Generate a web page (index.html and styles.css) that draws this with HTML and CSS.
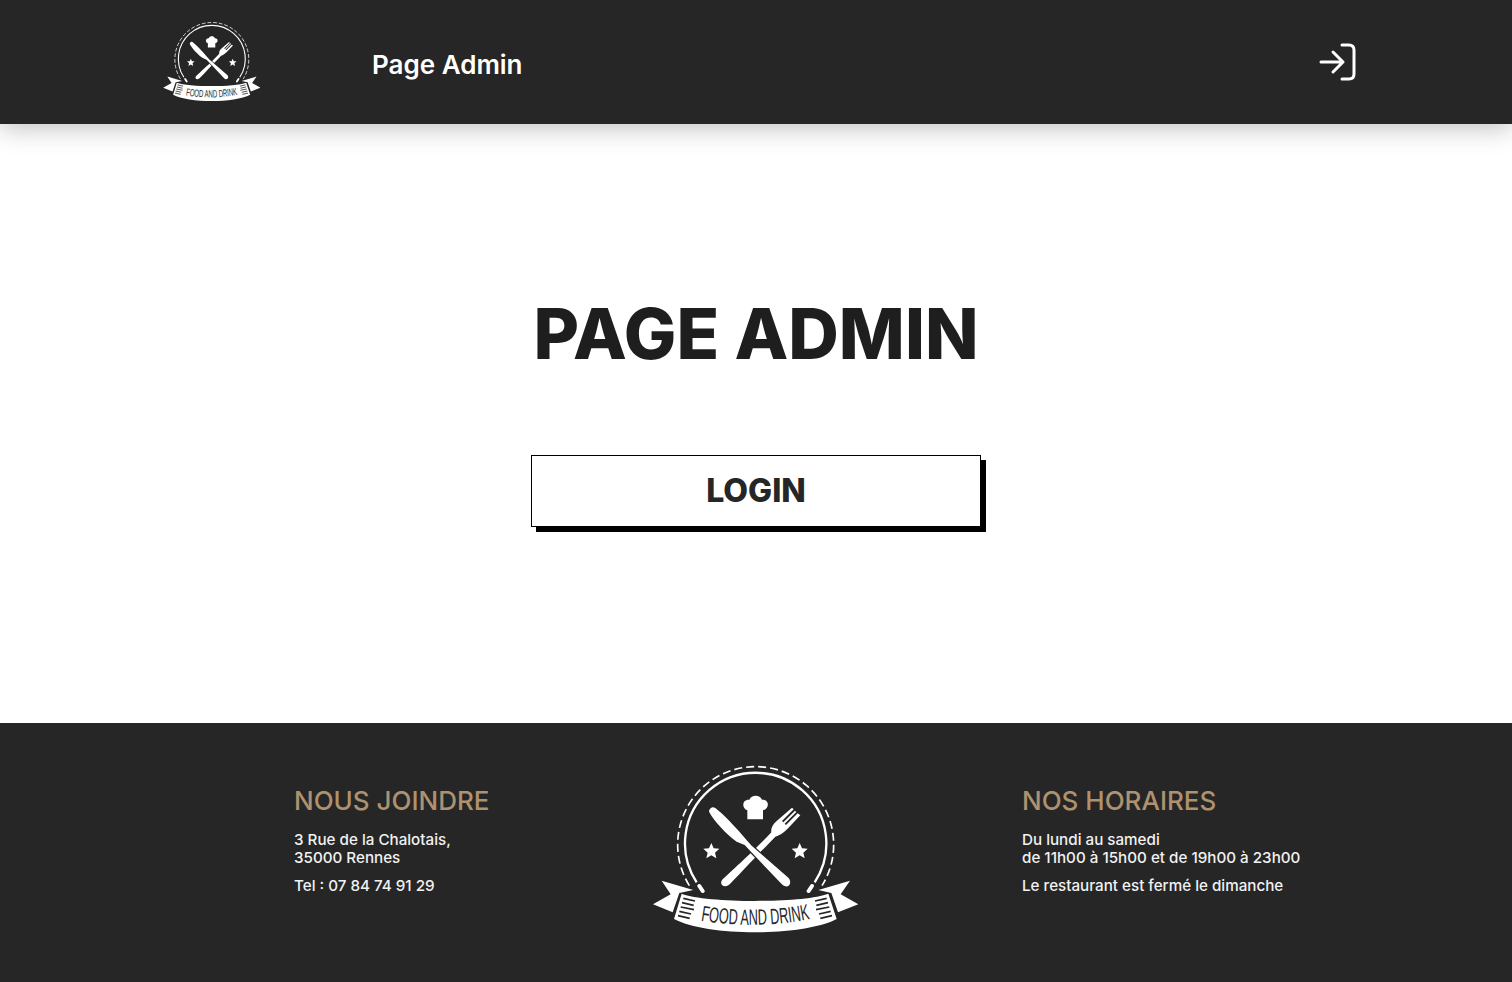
FILE: index.html
```html
<!DOCTYPE html>
<html lang="fr">
<head>
<meta charset="UTF-8">
<title>Page Admin</title>
<link rel="stylesheet" href="styles.css">
</head>
<body>
	<svg class="sprites" width="0" height="0">
		<defs>
			<path id="ribbon-line" d="M182 497 Q345 524 512 492"/>
		</defs>
		<symbol id="logo" viewBox="0 0 690 570">
			<!-- rings -->
			<path d="M148 392 A234 234 0 1 1 546 392" fill="none" stroke="#fff" stroke-width="5" stroke-dasharray="24 12"/>
			<path d="M170 382 A212 212 0 1 1 524 382" fill="none" stroke="#fff" stroke-width="7"/>
			<path d="M178 393 L188 408 M516 393 L506 408" stroke="#fff" stroke-width="12" stroke-linecap="round"/>
			<!-- chef hat -->
			<path d="M322 193 V166 C304 160 306 132 328 134 C334 118 360 118 366 134 C388 132 390 160 369 166 V193 Z" fill="#fff"/>
			<!-- fork -->
			<path d="M246 375 C262 358 330 300 394 232 C392 220 398 208 410 198 L456 158 L461 163 L426 198 L430 202 L465 167 L469 171 L434 206 L438 210 L473 175 L481 181 L442 222 C430 234 418 242 406 245 C350 302 295 362 272 385 C258 402 236 392 246 375 Z" fill="#fff"/>
			<!-- knife -->
			<path d="M212 160 C218 154 226 158 232 164 C260 185 300 232 335 272 L445 368 C456 380 450 396 436 394 C430 392 426 388 422 384 L340 298 L314 270 L290 260 C260 240 220 195 208 172 C206 168 208 164 212 160 Z" fill="#fff" stroke="#262626" stroke-width="7" paint-order="stroke"/>
			<!-- stars -->
			<path d="M214 264 L221 280 L238 281 L225 293 L229 310 L214 301 L199 310 L203 293 L190 281 L207 280 Z" fill="#fff"/>
			<path d="M479 264 L486 280 L503 281 L490 293 L494 310 L479 301 L464 310 L468 293 L455 281 L472 280 Z" fill="#fff"/>
			<!-- ribbon -->
			<path d="M65 377 L160 405 L118 414 L98 472 L39 448 L92 418 Z" fill="#fff"/>
			<path d="M630 377 L535 405 L574 414 L594 472 L655 448 L602 418 Z" fill="#fff"/>
			<path d="M125 416 C200 445 490 445 565 416 L590 492 C490 545 200 545 102 492 Z" fill="#fff"/>
			<path d="M130 430 L165 438 M126 443 L161 451 M122 456 L162 464 M118 469 L153 477 M114 482 L149 490" stroke="#262626" stroke-width="5"/>
			<path d="M560 430 L525 438 M564 443 L529 451 M568 456 L528 464 M572 469 L537 477 M576 482 L541 490" stroke="#262626" stroke-width="5"/>
		</symbol>
	</svg>

	<header class="topbar">
		<svg class="topbar-logo" viewBox="0 0 690 570">
			<use href="#logo" width="690" height="570"/>
			<text class="logo-text"><textPath href="#ribbon-line" textLength="330" lengthAdjust="spacingAndGlyphs">FOOD AND DRINK</textPath></text>
		</svg>
		<div class="topbar-title">Page Admin</div>
		<svg class="login-icon" viewBox="0 0 40 40" fill="none" stroke="#fff" stroke-width="3" stroke-linecap="round" stroke-linejoin="round">
			<path d="M4 20 H26 M16 10 L26 20 L16 30"/>
			<path d="M25 3 H32 Q37 3 37 8 V32 Q37 37 32 37 H25"/>
		</svg>
	</header>

	<main class="content">
		<h1 class="page-title">PAGE ADMIN</h1>
		<button class="login-btn" type="button">LOGIN</button>
	</main>

	<footer class="footer">
		<div class="footer-col">
			<h2>NOUS JOINDRE</h2>
			<p>3 Rue de la Chalotais,<br>35000 Rennes</p>
			<p>Tel : 07 84 74 91 29</p>
		</div>
		<svg class="footer-logo" viewBox="0 0 690 570">
			<use href="#logo" width="690" height="570"/>
			<text class="logo-text"><textPath href="#ribbon-line" textLength="330" lengthAdjust="spacingAndGlyphs">FOOD AND DRINK</textPath></text>
		</svg>
		<div class="footer-col">
			<h2>NOS HORAIRES</h2>
			<p>Du lundi au samedi<br>de 11h00 à 15h00 et de 19h00 à 23h00</p>
			<p>Le restaurant est fermé le dimanche</p>
		</div>
	</footer>
</body>
</html>
```

FILE: styles.css
```css
body{
	margin: 0;
	min-height: 100vh;
	display: flex;
	flex-direction: column;
	background: #ffffff;
	font-family: Inter, "Liberation Sans", sans-serif;
	color: #1e1e1e;
}

.sprites{
	display: block;
	height: 0;
}

.logo-text{
	font-family: "Liberation Sans", sans-serif;
	font-size: 66px;
	fill: #262626;
}

.topbar{
	height: 124px;
	display: flex;
	align-items: center;
	padding: 0 155px 0 157px;
	background: #262626;
	box-shadow: 0 4px 24px rgba(0,0,0,0.25);
	position: relative;
}

.topbar-logo{
	width: 109px;
	height: 90px;
}

.topbar-title{
	margin-left: 106px;
	margin-top: 5px;
	font-size: 26px;
	font-weight: 600;
	color: #ffffff;
}

.login-icon{
	width: 40px;
	height: 40px;
	margin-left: auto;
}

.content{
	height: 599px;
	display: flex;
	flex-direction: column;
	align-items: center;
	padding-top: 167px;
	box-sizing: border-box;
}

.page-title{
	margin: 0 0 79px 0;
	font-size: 70px;
	line-height: 85px;
	font-weight: 800;
}

.login-btn{
	width: 450px;
	height: 72px;
	background: #ffffff;
	border: 1px solid #000000;
	box-shadow: 5px 5px 0 #000000;
	font-family: inherit;
	font-size: 32px;
	font-weight: 800;
	color: #262626;
	padding: 0 0 2px 0;
}

.footer{
	height: 259px;
	display: grid;
	grid-template-columns: 359px 230px 1fr;
	padding-left: 294px;
	padding-top: 32px;
	box-sizing: border-box;
	background: #262626;
	color: #ffffff;
}

.footer-logo{
	width: 230px;
	height: 190px;
	margin-left: -13px;
}

.footer-col h2{
	margin: 30px 0 14px 0;
	font-size: 26px;
	line-height: 32px;
	font-weight: 500;
	color: #ae9270;
}

.footer-col p{
	margin: 0 0 10px 0;
	font-size: 15.2px;
	line-height: 18px;
	font-weight: 500;
	color: #f2f2f2;
}

.footer-col:last-child{
	margin-left: 139px;
}
```
